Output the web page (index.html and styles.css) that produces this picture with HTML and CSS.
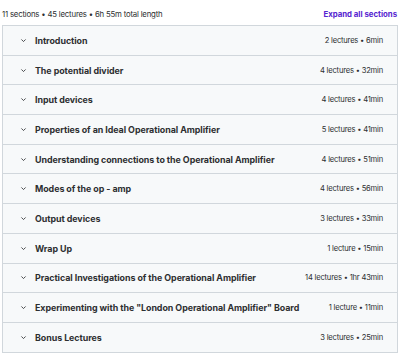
FILE: index.html
```html
<!DOCTYPE html>
<html>
<head>
<meta charset="utf-8">
<link rel="stylesheet" href="styles.css">
</head>
<body>
<div class="page">
  <div class="header">
    <span class="summary">11 sections • 45 lectures • 6h 55m total length</span>
    <span class="expand">Expand all sections</span>
  </div>
  <div class="list">
    <div class="row"><span class="chev"><svg viewBox="0 0 10 10" width="7" height="7"><path d="M2 3.5 L5 6.5 L8 3.5" fill="none" stroke="#2d2f31" stroke-width="1.2"/></svg></span><span class="title">Introduction</span><span class="meta">2 lectures • 6min</span></div>
    <div class="row"><span class="chev"><svg viewBox="0 0 10 10" width="7" height="7"><path d="M2 3.5 L5 6.5 L8 3.5" fill="none" stroke="#2d2f31" stroke-width="1.2"/></svg></span><span class="title">The potential divider</span><span class="meta">4 lectures • 32min</span></div>
    <div class="row"><span class="chev"><svg viewBox="0 0 10 10" width="7" height="7"><path d="M2 3.5 L5 6.5 L8 3.5" fill="none" stroke="#2d2f31" stroke-width="1.2"/></svg></span><span class="title">Input devices</span><span class="meta">4 lectures • 41min</span></div>
    <div class="row"><span class="chev"><svg viewBox="0 0 10 10" width="7" height="7"><path d="M2 3.5 L5 6.5 L8 3.5" fill="none" stroke="#2d2f31" stroke-width="1.2"/></svg></span><span class="title">Properties of an Ideal Operational Amplifier</span><span class="meta">5 lectures • 41min</span></div>
    <div class="row"><span class="chev"><svg viewBox="0 0 10 10" width="7" height="7"><path d="M2 3.5 L5 6.5 L8 3.5" fill="none" stroke="#2d2f31" stroke-width="1.2"/></svg></span><span class="title">Understanding connections to the Operational Amplifier</span><span class="meta">4 lectures • 51min</span></div>
    <div class="row"><span class="chev"><svg viewBox="0 0 10 10" width="7" height="7"><path d="M2 3.5 L5 6.5 L8 3.5" fill="none" stroke="#2d2f31" stroke-width="1.2"/></svg></span><span class="title">Modes of the op - amp</span><span class="meta">4 lectures • 56min</span></div>
    <div class="row"><span class="chev"><svg viewBox="0 0 10 10" width="7" height="7"><path d="M2 3.5 L5 6.5 L8 3.5" fill="none" stroke="#2d2f31" stroke-width="1.2"/></svg></span><span class="title">Output devices</span><span class="meta">3 lectures • 33min</span></div>
    <div class="row"><span class="chev"><svg viewBox="0 0 10 10" width="7" height="7"><path d="M2 3.5 L5 6.5 L8 3.5" fill="none" stroke="#2d2f31" stroke-width="1.2"/></svg></span><span class="title">Wrap Up</span><span class="meta">1 lecture • 15min</span></div>
    <div class="row"><span class="chev"><svg viewBox="0 0 10 10" width="7" height="7"><path d="M2 3.5 L5 6.5 L8 3.5" fill="none" stroke="#2d2f31" stroke-width="1.2"/></svg></span><span class="title">Practical Investigations of the Operational Amplifier</span><span class="meta">14 lectures • 1hr 43min</span></div>
    <div class="row"><span class="chev"><svg viewBox="0 0 10 10" width="7" height="7"><path d="M2 3.5 L5 6.5 L8 3.5" fill="none" stroke="#2d2f31" stroke-width="1.2"/></svg></span><span class="title">Experimenting with the "London Operational Amplifier" Board</span><span class="meta">1 lecture • 11min</span></div>
    <div class="row"><span class="chev"><svg viewBox="0 0 10 10" width="7" height="7"><path d="M2 3.5 L5 6.5 L8 3.5" fill="none" stroke="#2d2f31" stroke-width="1.2"/></svg></span><span class="title">Bonus Lectures</span><span class="meta">3 lectures • 25min</span></div>
  </div>
</div>
</body>
</html>
```
FILE: styles.css
```css
html, body {
  margin: 0;
  padding: 0;
  background: #ffffff;
}
.page {
  width: 396px;
  margin-left: 2px;
  font-family: Inter, "Noto Sans", sans-serif;
  color: #2d2f31;
}
.header {
  height: 25px;
  display: flex;
  align-items: center;
  justify-content: space-between;
  padding-top: 3px;
  box-sizing: border-box;
}
.summary {
  font-size: 7.8px;
  color: #2d2f31;
  letter-spacing: -0.2px;
}
.expand {
  font-size: 7.8px;
  font-weight: 700;
  color: #5624d0;
  margin-right: 1px;
}
.list {
  border: 1px solid #d1d7dc;
  border-bottom: none;
}
.row {
  height: 28.7px;
  border-bottom: 1px solid #d1d7dc;
  background: #f7f9fa;
  display: flex;
  align-items: center;
  padding: 0 14px 0 17px;
}
.chev {
  display: flex;
  width: 15px;
}
.title {
  flex: 1;
  font-size: 8.9px;
  font-weight: 700;
  letter-spacing: -0.05px;
}
.meta {
  font-size: 7.6px;
  color: #2d2f31;
  letter-spacing: -0.2px;
}
```
